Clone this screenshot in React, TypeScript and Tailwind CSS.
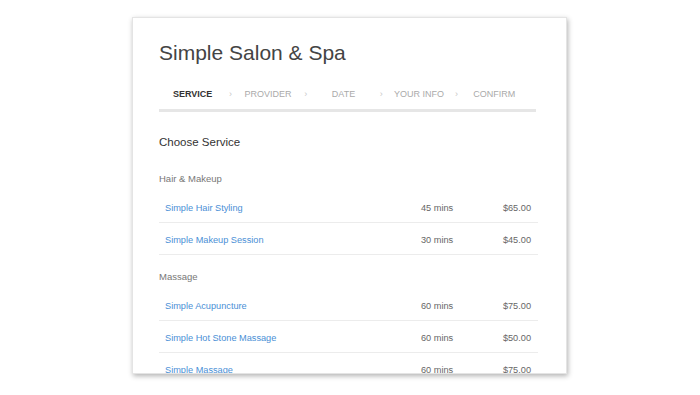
const steps = ["SERVICE", "PROVIDER", "DATE", "YOUR INFO", "CONFIRM"];

type Service = { name: string; duration: string; price: string };

const groups: { title: string; items: Service[] }[] = [
  {
    title: "Hair & Makeup",
    items: [
      { name: "Simple Hair Styling", duration: "45 mins", price: "$65.00" },
      { name: "Simple Makeup Session", duration: "30 mins", price: "$45.00" },
    ],
  },
  {
    title: "Massage",
    items: [
      { name: "Simple Acupuncture", duration: "60 mins", price: "$75.00" },
      { name: "Simple Hot Stone Massage", duration: "60 mins", price: "$50.00" },
      { name: "Simple Massage", duration: "60 mins", price: "$75.00" },
    ],
  },
];

export default function App() {
  return (
    <div
      className="w-[700px] h-[395px] bg-white overflow-hidden"
      style={{ fontFamily: '"Liberation Sans", Arial, sans-serif' }}
    >
      <div className="ml-[132px] mt-[17px] w-[435px] h-[357px] bg-white overflow-hidden shadow-[1px_2px_5px_rgba(0,0,0,0.3)] border border-[#e4e4e4]">
        <div className="pl-[26px] pr-[28px] pt-[24px]">
          <h1 className="text-[21px] leading-[21px] text-[#444]">Simple Salon &amp; Spa</h1>

          {/* steps */}
          <div className="mt-[18px] grid grid-cols-5 h-[28px] w-[377px]">
            {steps.map((s, i) => (
              <div key={s} className="flex items-center">
                <span
                  className={
                    i === 0
                      ? "flex-1 text-center text-[9px] font-bold text-[#333]"
                      : "flex-1 text-center text-[9px] text-[#aaa]"
                  }
                >
                  {s}
                </span>
                <span className="w-[8px] text-[9px] text-[#c8c8c8] text-center">
                  {i < steps.length - 1 ? "›" : ""}
                </span>
              </div>
            ))}
          </div>
          <div className="h-[3px] w-[377px] bg-[#e6e6e6]" />

          <h2 className="mt-[22px] text-[11.5px] leading-[16px] text-[#333]">Choose Service</h2>

          {groups.map((g, gi) => (
            <div key={g.title} className={gi === 0 ? "mt-[22px]" : "mt-[15px]"}>
              <div className="text-[9.5px] leading-[14px] text-[#777]">{g.title}</div>
              <ul className="mt-[5px] w-[379px]">
                {g.items.map((it) => (
                  <li
                    key={it.name}
                    className="flex items-center h-[32px] pt-[5px] border-b border-[#ececec] pl-[6px] pr-[7px] text-[9.2px]"
                  >
                    <span className="flex-1 text-[#4a8fd6]">{it.name}</span>
                    <span className="w-[60px] text-[#666]">{it.duration}</span>
                    <span className="w-[50px] text-right text-[#666]">{it.price}</span>
                  </li>
                ))}
              </ul>
            </div>
          ))}
        </div>
      </div>
    </div>
  );
}
